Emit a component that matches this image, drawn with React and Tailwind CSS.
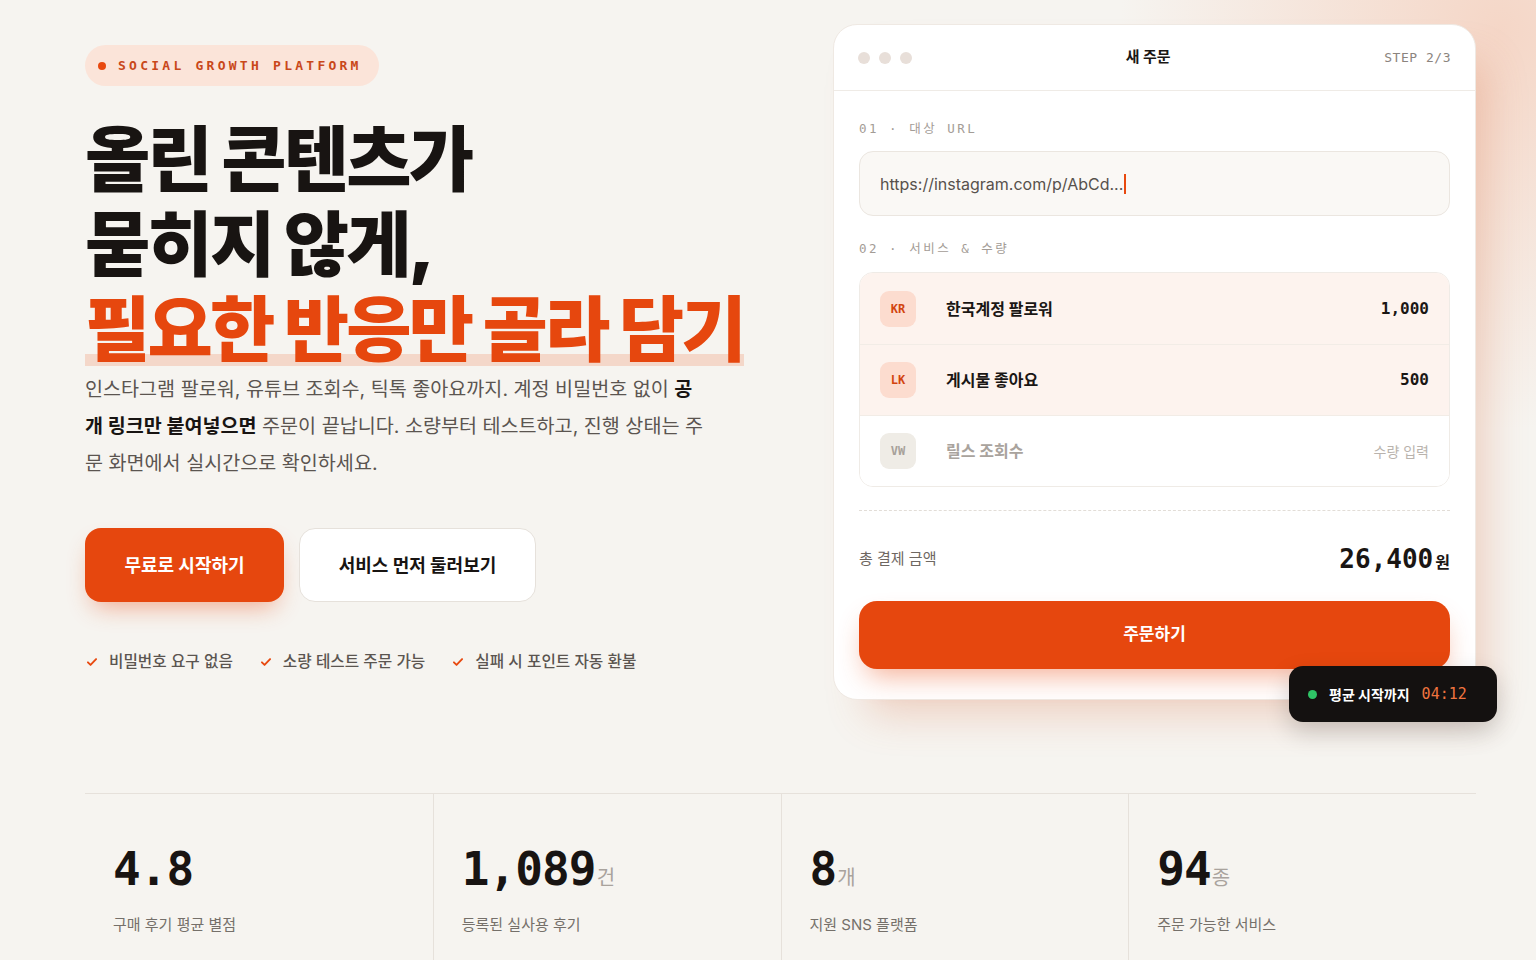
import React from "react";

const KR = { fontFamily: "Inter, 'Noto Sans CJK KR', sans-serif" };
const MONO = { fontFamily: "'DejaVu Sans Mono', 'Liberation Mono', 'Noto Sans CJK KR', monospace" };

function Check() {
  return (
    <svg width="14" height="14" viewBox="0 0 24 24" fill="none" stroke="#e8490f" strokeWidth="3.2" strokeLinecap="round" strokeLinejoin="round">
      <path d="M5 12.5l4.5 4.5L19 7" />
    </svg>
  );
}

const services = [
  { code: "KR", name: "한국계정 팔로워", value: "1,000", active: true },
  { code: "LK", name: "게시물 좋아요", value: "500", active: true },
  { code: "VW", name: "릴스 조회수", value: "수량 입력", active: false },
];

const stats = [
  { n: "4.8", unit: "", label: "구매 후기 평균 별점" },
  { n: "1,089", unit: "건", label: "등록된 실사용 후기" },
  { n: "8", unit: "개", label: "지원 SNS 플랫폼" },
  { n: "94", unit: "종", label: "주문 가능한 서비스" },
];

function OrderCard() {
  return (
    <div className="relative w-[643px] mt-[24px] bg-white rounded-[24px] border border-[#efe9e3] shadow-[22px_26px_40px_-12px_rgba(214,110,70,0.28)]">
      <div className="h-[66px] flex items-center justify-between px-[24px] border-b border-[#efebe6]">
        <div className="flex gap-[9px]">
          <span className="w-[12px] h-[12px] rounded-full bg-[#e8dfd9]" />
          <span className="w-[12px] h-[12px] rounded-full bg-[#e8dfd9]" />
          <span className="w-[12px] h-[12px] rounded-full bg-[#e8dfd9]" />
        </div>
        <div className="text-[15px] font-bold text-[#1a1614]" style={KR}>새 주문</div>
        <div className="text-right text-[13px] text-[#8b847e] tracking-[0.04em]" style={MONO}>STEP 2/3</div>
      </div>

      <div className="px-[25px] pt-[30px] pb-[30px]">
        <div className="text-[12.5px] text-[#a39c96] tracking-[0.2em] leading-[16px]" style={MONO}>01 · 대상 URL</div>
        <div className="mt-[14px] h-[65px] rounded-[14px] bg-[#faf8f5] border border-[#ebe6e0] flex items-center px-[20px]">
          <span className="text-[16px] text-[#57514c]" style={KR}>https://instagram.com/p/AbCd...</span>
          <span className="w-[2px] h-[20px] bg-[#e8490f] ml-[1px]" />
        </div>

        <div className="mt-[25px] text-[12.5px] text-[#a39c96] tracking-[0.2em] leading-[16px]" style={MONO}>02 · 서비스 &amp; 수량</div>
        <div className="mt-[15px] rounded-[14px] border border-[#efebe6] overflow-hidden">
          {services.map((s, i) => (
            <div
              key={s.code}
              className={`h-[71px] flex items-center px-[20px] ${i > 0 ? "border-t border-[#f2ece6]" : ""} ${s.active ? "bg-[#fdf3ee]" : "bg-white"}`}
            >
              <div
                className={`w-[36px] h-[36px] rounded-[9px] flex items-center justify-center text-[12px] font-bold ${s.active ? "bg-[#fcdccf] text-[#d2440f]" : "bg-[#efece6] text-[#a7a19a]"}`}
                style={MONO}
              >
                {s.code}
              </div>
              <div className={`ml-[30px] flex-1 text-[16px] font-bold ${s.active ? "text-[#1a1614]" : "text-[#a9a39d]"}`} style={KR}>
                {s.name}
              </div>
              {s.active ? (
                <div className="text-[16px] font-bold text-[#1a1614]" style={MONO}>{s.value}</div>
              ) : (
                <div className="text-[14px] text-[#b9b3ad]" style={KR}>{s.value}</div>
              )}
            </div>
          ))}
        </div>

        <div className="mt-[23px] border-t border-dashed border-[#e2ddd7]" />

        <div className="mt-[29px] flex items-center justify-between">
          <span className="text-[15px] text-[#6e6761]" style={KR}>총 결제 금액</span>
          <span className="flex items-baseline">
            <span className="text-[26px] font-bold text-[#1a1614]" style={MONO}>26,400</span>
            <span className="text-[16px] font-bold text-[#1a1614] ml-[2px]" style={KR}>원</span>
          </span>
        </div>

        <button className="mt-[22px] w-full h-[68px] rounded-[18px] bg-[#e6470e] text-white text-[17px] font-bold shadow-[0_14px_28px_-8px_rgba(232,73,15,0.45)]" style={KR}>
          주문하기
        </button>
      </div>

      <div className="absolute -right-[22px] -bottom-[23px] w-[208px] h-[56px] rounded-[14px] bg-[#141110] flex items-center px-[19px] gap-[12px] shadow-[0_10px_24px_rgba(0,0,0,0.18)]">
        <span className="w-[9px] h-[9px] rounded-full bg-[#2fc466]" />
        <span className="text-[14px] font-bold text-white" style={KR}>평균 시작까지</span>
        <span className="text-[15px] text-[#f0743f]" style={MONO}>04:12</span>
      </div>
    </div>
  );
}

export default function App() {
  return (
    <div
      className="min-h-screen w-full bg-[#f6f4f0] bg-[radial-gradient(ellipse_380px_400px_at_1500px_30px,rgba(244,190,165,0.55),rgba(246,244,240,0))] overflow-hidden"
      style={KR}
    >
      <div className="pl-[85px] pr-[60px]">
        <div className="flex justify-between">
          <div className="pt-[45px]">
            <div className="inline-flex items-center h-[41px] px-[13px] rounded-full bg-[#fbe4d9]">
              <span className="w-[8px] h-[8px] rounded-full bg-[#e8490f]" />
              <span className="ml-[12px] mr-[4px] text-[13px] font-bold text-[#c9481a] tracking-[0.25em]" style={MONO}>SOCIAL GROWTH PLATFORM</span>
            </div>

            <h1 className="mt-[31px] text-[71px] leading-[85px] font-black tracking-[-0.04em] text-[#181412]" style={KR}>
              <span className="block">올린 콘텐츠가</span>
              <span className="block">묻히지 않게,</span>
              <span className="relative inline-block text-[#e6470e]">
                <span className="absolute left-0 right-0 bottom-[6px] h-[12px] bg-[#f4cbb8] opacity-70" />
                <span className="relative">필요한 반응만 골라 담기</span>
              </span>
            </h1>

            <p className="-mt-[1px] w-[623px] text-[19.6px] leading-[37px] text-[#5b5550]" style={KR}>
              인스타그램 팔로워, 유튜브 조회수, 틱톡 좋아요까지. 계정 비밀번호 없이 <b className="text-[#181412] font-bold">공개 링크만 붙여넣으면</b> 주문이 끝납니다. 소량부터 테스트하고, 진행 상태는 주문 화면에서 실시간으로 확인하세요.
            </p>

            <div className="mt-[46px] flex gap-[15px]">
              <button className="w-[199px] h-[74px] rounded-[16px] bg-[#e6470e] text-white text-[18px] font-bold shadow-[0_12px_24px_-8px_rgba(232,73,15,0.45)]" style={KR}>
                무료로 시작하기
              </button>
              <button className="w-[237px] h-[74px] rounded-[16px] bg-white border border-[#e6e1db] text-[#181412] text-[18px] font-bold" style={KR}>
                서비스 먼저 둘러보기
              </button>
            </div>

            <div className="mt-[48px] flex gap-[26px] text-[15.7px] font-medium text-[#5b5550]">
              {["비밀번호 요구 없음", "소량 테스트 주문 가능", "실패 시 포인트 자동 환불"].map((t) => (
                <div key={t} className="flex items-center gap-[10px]">
                  <Check />
                  <span>{t}</span>
                </div>
              ))}
            </div>
          </div>

          <OrderCard />
        </div>

        <div className="mt-[93px] grid grid-cols-4 border-t border-[#e6e1db]">
          {stats.map((s, i) => (
            <div key={s.label} className={`h-[170px] pl-[28px] pt-[50px] ${i > 0 ? "border-l border-[#e6e1db]" : ""}`}>
              <div className="flex items-baseline">
                <span className="text-[46px] leading-[50px] font-bold text-[#181412] tracking-[-0.02em]" style={MONO}>{s.n}</span>
                {s.unit && <span className="text-[20px] text-[#a9a39d] ml-[1px]" style={KR}>{s.unit}</span>}
              </div>
              <div className="mt-[20px] text-[15px] text-[#75706a]" style={KR}>{s.label}</div>
            </div>
          ))}
        </div>
      </div>
    </div>
  );
}
